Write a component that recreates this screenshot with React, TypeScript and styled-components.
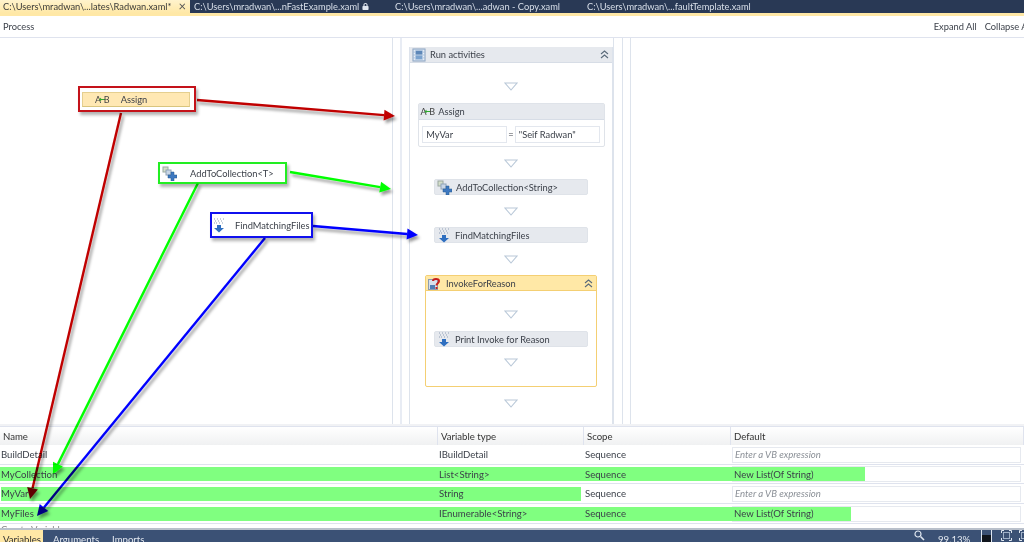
import styled, { createGlobalStyle } from "styled-components";
import { FaLock } from "react-icons/fa";

const GlobalStyle = createGlobalStyle`
  html, body {
    margin: 0;
    padding: 0;
    background: #ffffff;
    overflow: hidden;
  }
  * {
    box-sizing: border-box;
  }
`;

const AbIcon = () => (
  <AbGlyph>
    A<AbPlus>←</AbPlus>B
  </AbGlyph>
);

const SequenceIcon = () => (
  <svg width="14" height="14" viewBox="0 0 15 15">
    <rect x="1" y="1" width="13" height="13" fill="#c5d5e8" stroke="#8fa6c2" />
    <rect x="4" y="3" width="7" height="4" fill="#5d87b8" />
    <rect x="4" y="8" width="7" height="4" fill="#7ba3cf" />
    <path d="M2 3h1M2 6h1M2 9h1M2 12h1M12 3h1M12 6h1M12 9h1M12 12h1" stroke="#ffffff" />
  </svg>
);

const CollectionIcon = () => (
  <svg width="15" height="15" viewBox="0 0 15 15">
    <rect x="1" y="1" width="5" height="5" fill="#d5dfc9" stroke="#9aa8a0" />
    <rect x="4" y="4" width="5" height="5" fill="#c8d6e6" stroke="#8fa3b8" />
    <path d="M9 6h3v3h3v3h-3v3H9v-3H6V9h3z" fill="#3d78c0" stroke="#27588f" strokeWidth="0.5" />
  </svg>
);

const FindIcon = () => (
  <svg width="14" height="15" viewBox="0 0 14 15">
    <path
      d="M2 1h1M5 1h1M8 1h1M11 1h1M3 3h1M6 3h1M9 3h1M4 5h1M7 5h1M10 5h1M2 5h1"
      stroke="#8f9fb5"
      strokeWidth="1.2"
    />
    <path d="M5 7h4v3h3l-5 4.5L2 10h3z" fill="#2f6fc0" />
  </svg>
);

const ReasonIcon = () => (
  <svg width="13" height="13" viewBox="0 0 13 13">
    <rect x="0.5" y="2.5" width="9" height="10" fill="#d8e0ea" stroke="#8d9db0" />
    <rect x="2" y="8" width="5" height="4" fill="#4f7db3" />
    <path
      d="M5 4c0-2.600 6-3 6 0 0 2.200-2.500 2.200-2.500 4.500"
      fill="none"
      stroke="#c8201c"
      strokeWidth="2"
    />
    <rect x="7.500" y="10" width="2" height="2" fill="#c8201c" />
  </svg>
);

const CollapseIcon = () => (
  <svg width="9" height="9" viewBox="0 0 9 9">
    <path d="M1 4l3.500-3L8 4M1 8l3.500-3L8 8" fill="none" stroke="#5a6a7a" strokeWidth="1.100" />
  </svg>
);

const DropTarget = () => (
  <svg width="14" height="9" viewBox="0 0 14 9">
    <path d="M1 1h12L7 8z" fill="#ffffff" stroke="#b9c8d8" strokeWidth="1.100" />
  </svg>
);

const FitCorners = () => (
  <svg width="11" height="11" viewBox="0 0 11 11">
    <path d="M0.500 3V0.500H3M8 0.500h2.500V3M10.500 8v2.500H8M3 10.500H0.500V8" fill="none" stroke="#dfe6f0" />
    <rect x="2.500" y="2.500" width="6" height="6" fill="none" stroke="#9fb0c8" />
  </svg>
);

const Arrow = ({ x1, y1, x2, y2, color }: { x1: number; y1: number; x2: number; y2: number; color: string }) => {
  const angle = Math.atan2(y2 - y1, x2 - x1);
  const len = 11;
  const half = 5.5;
  const bx = x2 - len * Math.cos(angle);
  const by = y2 - len * Math.sin(angle);
  const nx = -Math.sin(angle) * half;
  const ny = Math.cos(angle) * half;
  return (
    <g>
      <line x1={x1} y1={y1} x2={bx} y2={by} stroke={color} strokeWidth="2.400" />
      <polygon points={`${x2},${y2} ${bx + nx},${by + ny} ${bx - nx},${by - ny}`} fill={color} />
    </g>
  );
};

const rows = [
  { name: "BuildDetail", type: "IBuildDetail", value: "", green: "none", height: 20 },
  { name: "MyCollection", type: "List<String>", value: "New List(Of String)", green: "wide", height: 19 },
  { name: "MyVar", type: "String", value: "", green: "type", height: 20 },
  { name: "MyFiles", type: "IEnumerable<String>", value: "New List(Of String)", green: "short", height: 20 },
];

export default function App() {
  return (
    <Page>
      <GlobalStyle />
      <TabStrip>
        <ActiveTab>
          C:\Users\mradwan\...lates\Radwan.xaml*
          <TabClose>×</TabClose>
        </ActiveTab>
        <Tab $width={201}>
          C:\Users\mradwan\...nFastExample.xaml
          <LockGlyph>
            <FaLock size={7} />
          </LockGlyph>
        </Tab>
        <Tab $width={192}>C:\Users\mradwan\...adwan - Copy.xaml</Tab>
        <Tab $width={190}>C:\Users\mradwan\...faultTemplate.xaml</Tab>
      </TabStrip>
      <TabUnderline />
      <Toolbar>
        <span>Process</span>
        <ToolbarLinks>
          <span>Expand All</span>
          <span>Collapse All</span>
        </ToolbarLinks>
      </Toolbar>

      <Canvas>
        <LeftPane>
          <Dragged $left={78} $top={48} $width={118} $height={26} $color="#c4121a">
            <AssignChip>
              <AbIcon />
              <span>Assign</span>
            </AssignChip>
          </Dragged>
          <Dragged $left={158} $top={124} $width={129} $height={22} $color="#22ee22">
            <DraggedIcon>
              <CollectionIcon />
            </DraggedIcon>
            <span>AddToCollection&lt;T&gt;</span>
          </Dragged>
          <Dragged $left={210} $top={174} $width={103} $height={26} $color="#1010ee" $gap={7} $pad={0}>
            <DraggedIcon>
              <FindIcon />
            </DraggedIcon>
            <span>FindMatchingFiles</span>
          </Dragged>
        </LeftPane>
        <Rail $width={7} />
        <Band />
        <Rail $width={7} />
        <Sequence>
          <SequenceHeader>
            <SequenceIcon />
            <HeaderTitle>Run activities</HeaderTitle>
            <CollapseIcon />
          </SequenceHeader>
          <SequenceBody>
            <Drop $tall>
              <DropTarget />
            </Drop>
            <AssignCard>
              <AssignHeader>
                <AbIcon />
                <span>Assign</span>
              </AssignHeader>
              <AssignFields>
                <Field>MyVar</Field>
                <span>=</span>
                <Field>"Seif Radwan"</Field>
              </AssignFields>
            </AssignCard>
            <Drop>
              <DropTarget />
            </Drop>
            <Activity>
              <CollectionIcon />
              <span>AddToCollection&lt;String&gt;</span>
            </Activity>
            <Drop>
              <DropTarget />
            </Drop>
            <Activity>
              <FindIcon />
              <span>FindMatchingFiles</span>
            </Activity>
            <Drop>
              <DropTarget />
            </Drop>
            <ReasonCard>
              <ReasonHeader>
                <ReasonIcon />
                <HeaderTitle>InvokeForReason</HeaderTitle>
                <CollapseIcon />
              </ReasonHeader>
              <Drop $tall>
                <DropTarget />
              </Drop>
              <Activity>
                <FindIcon />
                <span>Print Invoke for Reason</span>
              </Activity>
              <Drop $tall $last>
                <DropTarget />
              </Drop>
            </ReasonCard>
            <Drop>
              <DropTarget />
            </Drop>
          </SequenceBody>
        </Sequence>
        <Rail $width={9} $left />
        <Rail $width={8} $left />
        <RightPane />
      </Canvas>

      <Divider />

      <Variables>
        <HeaderRow>
          <HeaderCell>Name</HeaderCell>
          <HeaderCell>Variable type</HeaderCell>
          <HeaderCell>Scope</HeaderCell>
          <HeaderCell>Default</HeaderCell>
        </HeaderRow>
        {rows.map((row) => (
          <Row key={row.name} $height={row.height}>
            <Cell>
              <CellText $green={row.green !== "none"} $startInset={row.green === "type"}>
                {row.name}
              </CellText>
            </Cell>
            <Cell>
              <CellText $green={row.green !== "none"} $endInset={row.green === "type"}>
                {row.type}
              </CellText>
            </Cell>
            <Cell>
              <CellText $green={row.green === "wide" || row.green === "short"}>Sequence</CellText>
            </Cell>
            <Cell>
              <ValueBox>
                {row.value ? (
                  <ValueText $width={row.green === "wide" ? 134 : 120}>{row.value}</ValueText>
                ) : (
                  <Placeholder>Enter a VB expression</Placeholder>
                )}
              </ValueBox>
            </Cell>
          </Row>
        ))}
        <CreateRow>Create Variable</CreateRow>
      </Variables>

      <BottomBar>
        <BottomTab $active>Variables</BottomTab>
        <BottomTab>Arguments</BottomTab>
        <BottomTab>Imports</BottomTab>
        <Status>
          <svg width="11" height="11" viewBox="0 0 11 11">
            <circle cx="4" cy="4" r="3" fill="none" stroke="#dfe6f0" strokeWidth="1.200" />
            <path d="M6.500 6.500L10 10" stroke="#dfe6f0" strokeWidth="1.600" />
          </svg>
          <ZoomValue>99.13%</ZoomValue>
          <StatusBox />
          <FitCorners />
          <FitCorners />
        </Status>
      </BottomBar>

      <ArrowLayer width="1024" height="542" viewBox="0 0 1024 542">
        <defs>
          <filter id="arrowShadow" x="-20%" y="-20%" width="140%" height="140%">
            <feDropShadow dx="2" dy="3" stdDeviation="1.500" floodColor="#000000" floodOpacity="0.4" />
          </filter>
        </defs>
        <g filter="url(#arrowShadow)">
          <Arrow x1={197} y1={100} x2={395} y2={116} color="#c00000" />
          <Arrow x1={121} y1={113} x2={30} y2={499} color="#c00000" />
          <Arrow x1={290} y1={172} x2={391} y2={189} color="#00ff00" />
          <Arrow x1={198} y1={183} x2={53} y2={474} color="#00ff00" />
          <Arrow x1={313} y1={226} x2={418} y2={235} color="#0000ff" />
          <Arrow x1={265} y1={238} x2={37} y2={516} color="#0000ff" />
        </g>
      </ArrowLayer>
    </Page>
  );
}

const Page = styled.div`
  position: relative;
  display: flex;
  flex-direction: column;
  width: 1024px;
  height: 542px;
  overflow: hidden;
  background: #ffffff;
  font-family: Lato, "Open Sans", sans-serif;
  font-size: 9.3px;
  color: #3a3f48;
  filter: blur(0.35px);
`;

const TabStrip = styled.div`
  display: flex;
  height: 13px;
  background: #293955;
  color: #d8dfe9;
  white-space: nowrap;
`;

const ActiveTab = styled.div`
  display: flex;
  align-items: center;
  justify-content: space-between;
  width: 190px;
  padding: 0 4px 0 3px;
  background: linear-gradient(#fff3cd, #ffe8a6);
  color: #3a3a3a;
`;

const TabClose = styled.span`
  font-size: 13px;
  line-height: 13px;
  color: #555555;
`;

const Tab = styled.div<{ $width: number }>`
  display: flex;
  align-items: center;
  width: ${(p) => p.$width}px;
  padding-left: 4px;
`;

const LockGlyph = styled.span`
  display: flex;
  margin-left: 3px;
  color: #dfe6f0;
`;

const TabUnderline = styled.div`
  height: 3px;
  background: #ffe8a6;
`;

const Toolbar = styled.div`
  display: flex;
  align-items: center;
  justify-content: space-between;
  height: 22px;
  padding-left: 3px;
  border-bottom: 1px solid #dfe3ee;
  white-space: nowrap;
`;

const ToolbarLinks = styled.div`
  display: flex;
  gap: 8px;
  margin-right: -8px;
`;

const Canvas = styled.div`
  display: flex;
  height: 386px;
  overflow: hidden;
`;

const LeftPane = styled.div`
  position: relative;
  width: 393px;
  border-right: 1px solid #dde3ec;
`;

const Rail = styled.div<{ $width: number; $left?: boolean }>`
  width: ${(p) => p.$width}px;
  ${(p) => (p.$left ? "border-left: 1px solid #dde3ec;" : "")}
`;

const Band = styled.div`
  width: 2px;
  background: #e8ecf4;
`;

const RightPane = styled.div`
  flex: 1;
  border-left: 1px solid #dde3ec;
`;

const Dragged = styled.div<{
  $left: number;
  $top: number;
  $width: number;
  $height: number;
  $color: string;
  $gap?: number;
  $pad?: number;
}>`
  position: absolute;
  left: ${(p) => p.$left}px;
  top: ${(p) => p.$top}px;
  display: flex;
  align-items: center;
  gap: ${(p) => p.$gap ?? 12}px;
  width: ${(p) => p.$width}px;
  height: ${(p) => p.$height}px;
  padding: 0 ${(p) => p.$pad ?? 2}px;
  border: 2px solid ${(p) => p.$color};
  background: #ffffff;
  box-shadow: 2px 3px 3px rgba(0, 0, 0, 0.3);
  white-space: nowrap;
`;

const DraggedIcon = styled.span`
  display: flex;
  width: 16px;
`;

const AssignChip = styled.div`
  display: flex;
  align-items: center;
  gap: 11px;
  width: 108px;
  height: 15px;
  padding-left: 12px;
  background: #ffe8b3;
  border: 1px solid #e5cf8f;
  border-bottom-color: #d9c57d;
`;

const AbGlyph = styled.span`
  display: inline-flex;
  align-items: center;
  font-size: 9px;
  color: #444444;
  white-space: nowrap;
`;

const AbPlus = styled.span`
  margin: 0 -2px;
  font-size: 8px;
  color: #2fa82f;
  font-family: "DejaVu Sans", sans-serif;
  font-weight: 700;
`;

const Sequence = styled.div`
  display: flex;
  flex-direction: column;
  width: 204px;
  margin-top: 9px;
  border-left: 1px solid #dde3ec;
  border-right: 1px solid #dde3ec;
`;

const SequenceHeader = styled.div`
  display: flex;
  align-items: center;
  gap: 4px;
  height: 16px;
  padding: 0 3px 0 2px;
  background: #e6e9ee;
  border-bottom: 1px solid #d7dde6;
  flex-shrink: 0;
`;

const HeaderTitle = styled.span`
  flex: 1;
  white-space: nowrap;
`;

const SequenceBody = styled.div`
  display: flex;
  flex-direction: column;
  align-items: center;
`;

const Drop = styled.div<{ $tall?: boolean; $last?: boolean }>`
  display: flex;
  justify-content: center;
  align-items: ${(p) => (p.$tall ? "flex-start" : "center")};
  height: ${(p) => (p.$tall ? 40 : 32)}px;
  padding-top: ${(p) => (p.$tall ? (p.$last ? 11 : 19) : 0)}px;
  flex-shrink: 0;
`;

const AssignCard = styled.div`
  width: 187px;
  height: 44px;
  border: 1px solid #dfe3e9;
  border-radius: 2px;
  flex-shrink: 0;
`;

const AssignHeader = styled.div`
  display: flex;
  align-items: center;
  gap: 3px;
  height: 16px;
  padding-left: 2px;
  background: #e6e9ee;
  border-bottom: 1px solid #d7dde6;
`;

const AssignFields = styled.div`
  display: flex;
  align-items: center;
  justify-content: center;
  padding-top: 6px;
`;

const Field = styled.div`
  display: flex;
  align-items: center;
  width: 85px;
  height: 17px;
  margin: 0 1px;
  padding-left: 3px;
  border: 1px solid #e3e7ee;
  white-space: nowrap;
`;

const Activity = styled.div`
  display: flex;
  align-items: center;
  gap: 4px;
  width: 154px;
  height: 16px;
  padding-left: 2px;
  background: #e6e9ee;
  border: 1px solid #dfe3e9;
  border-radius: 2px;
  white-space: nowrap;
  flex-shrink: 0;
`;

const ReasonCard = styled.div`
  display: flex;
  flex-direction: column;
  align-items: center;
  width: 172px;
  height: 112px;
  border: 1px solid #f4cf73;
  border-radius: 2px;
  flex-shrink: 0;
`;

const ReasonHeader = styled.div`
  display: flex;
  align-items: center;
  gap: 5px;
  align-self: stretch;
  height: 15px;
  padding: 0 3px 0 2px;
  background: #ffe8a6;
  border-bottom: 1px solid #f4cf73;
  flex-shrink: 0;
`;

const Divider = styled.div`
  height: 2px;
  background: #f1f2f5;
`;

const Variables = styled.div`
  display: flex;
  flex-direction: column;
  height: 104px;
  overflow: hidden;
  font-size: 9.6px;
  border-bottom: 2px solid #b9c0cb;
`;

const columns = "438px 146px 147px 1fr";

const HeaderRow = styled.div`
  display: grid;
  grid-template-columns: ${columns};
  height: 19px;
  flex-shrink: 0;
  border-top: 1px solid #dfe3ee;
`;

const HeaderCell = styled.div`
  display: flex;
  align-items: center;
  padding-left: 3px;
  background: linear-gradient(#ffffff, #f0f1f2);
  border-right: 1px solid #dfe3ee;
  color: #333333;
`;

const Row = styled.div<{ $height: number }>`
  display: grid;
  grid-template-columns: ${columns};
  height: ${(p) => p.$height}px;
  flex-shrink: 0;
  border-bottom: 1px solid #dfe3ee;
`;

const Cell = styled.div`
  display: flex;
  align-items: center;
  min-width: 0;
  white-space: nowrap;
`;

const CellText = styled.div<{ $green: boolean; $startInset?: boolean; $endInset?: boolean }>`
  display: flex;
  align-items: center;
  flex: 1;
  height: 14px;
  padding-left: ${(p) => (p.$startInset ? 0 : 1)}px;
  margin-left: ${(p) => (p.$startInset ? 1 : 0)}px;
  margin-right: ${(p) => (p.$endInset ? 3 : 0)}px;
  background: ${(p) => (p.$green ? "#80ff80" : "transparent")};
`;

const ValueBox = styled.div`
  display: flex;
  align-items: center;
  width: 289px;
  height: 16px;
  margin-left: 1px;
  border: 1px solid #e6e9ef;
`;

const ValueText = styled.div<{ $width: number }>`
  display: flex;
  align-items: center;
  width: ${(p) => p.$width}px;
  height: 14px;
  padding-left: 3px;
  margin-left: -2px;
  background: #80ff80;
`;

const Placeholder = styled.span`
  padding-left: 2px;
  font-style: italic;
  color: #8a8f96;
`;

const CreateRow = styled.div`
  padding-left: 1px;
  color: #888888;
  white-space: nowrap;
`;

const BottomBar = styled.div`
  display: flex;
  height: 12px;
  overflow: hidden;
  font-size: 9.6px;
  background: #3b5175;
  color: #e4e9f1;
  white-space: nowrap;
`;

const BottomTab = styled.div<{ $active?: boolean }>`
  width: ${(p) => (p.$active ? "43px" : "auto")};
  padding: 4px ${(p) => (p.$active ? "0" : "3px")} 0 ${(p) => (p.$active ? "3px" : "10px")};
  background: ${(p) => (p.$active ? "#ffe8a6" : "transparent")};
  color: ${(p) => (p.$active ? "#333333" : "#e4e9f1")};
`;

const Status = styled.div`
  display: flex;
  align-items: flex-start;
  flex-shrink: 0;
  margin-left: auto;
  margin-right: -6px;

  svg + svg {
    margin-left: 7px;
  }
`;

const ZoomValue = styled.span`
  width: 30px;
  margin: 0 13px;
  padding-top: 4px;
`;

const StatusBox = styled.div`
  width: 11px;
  height: 14px;
  margin-right: 9px;
  border: 1px solid #dfe6f0;
  border-top: 0;
  background: linear-gradient(#3b5175 35%, #10151d 35%);
`;

const ArrowLayer = styled.svg`
  position: absolute;
  left: 0;
  top: 0;
  mix-blend-mode: multiply;
  pointer-events: none;
`;
